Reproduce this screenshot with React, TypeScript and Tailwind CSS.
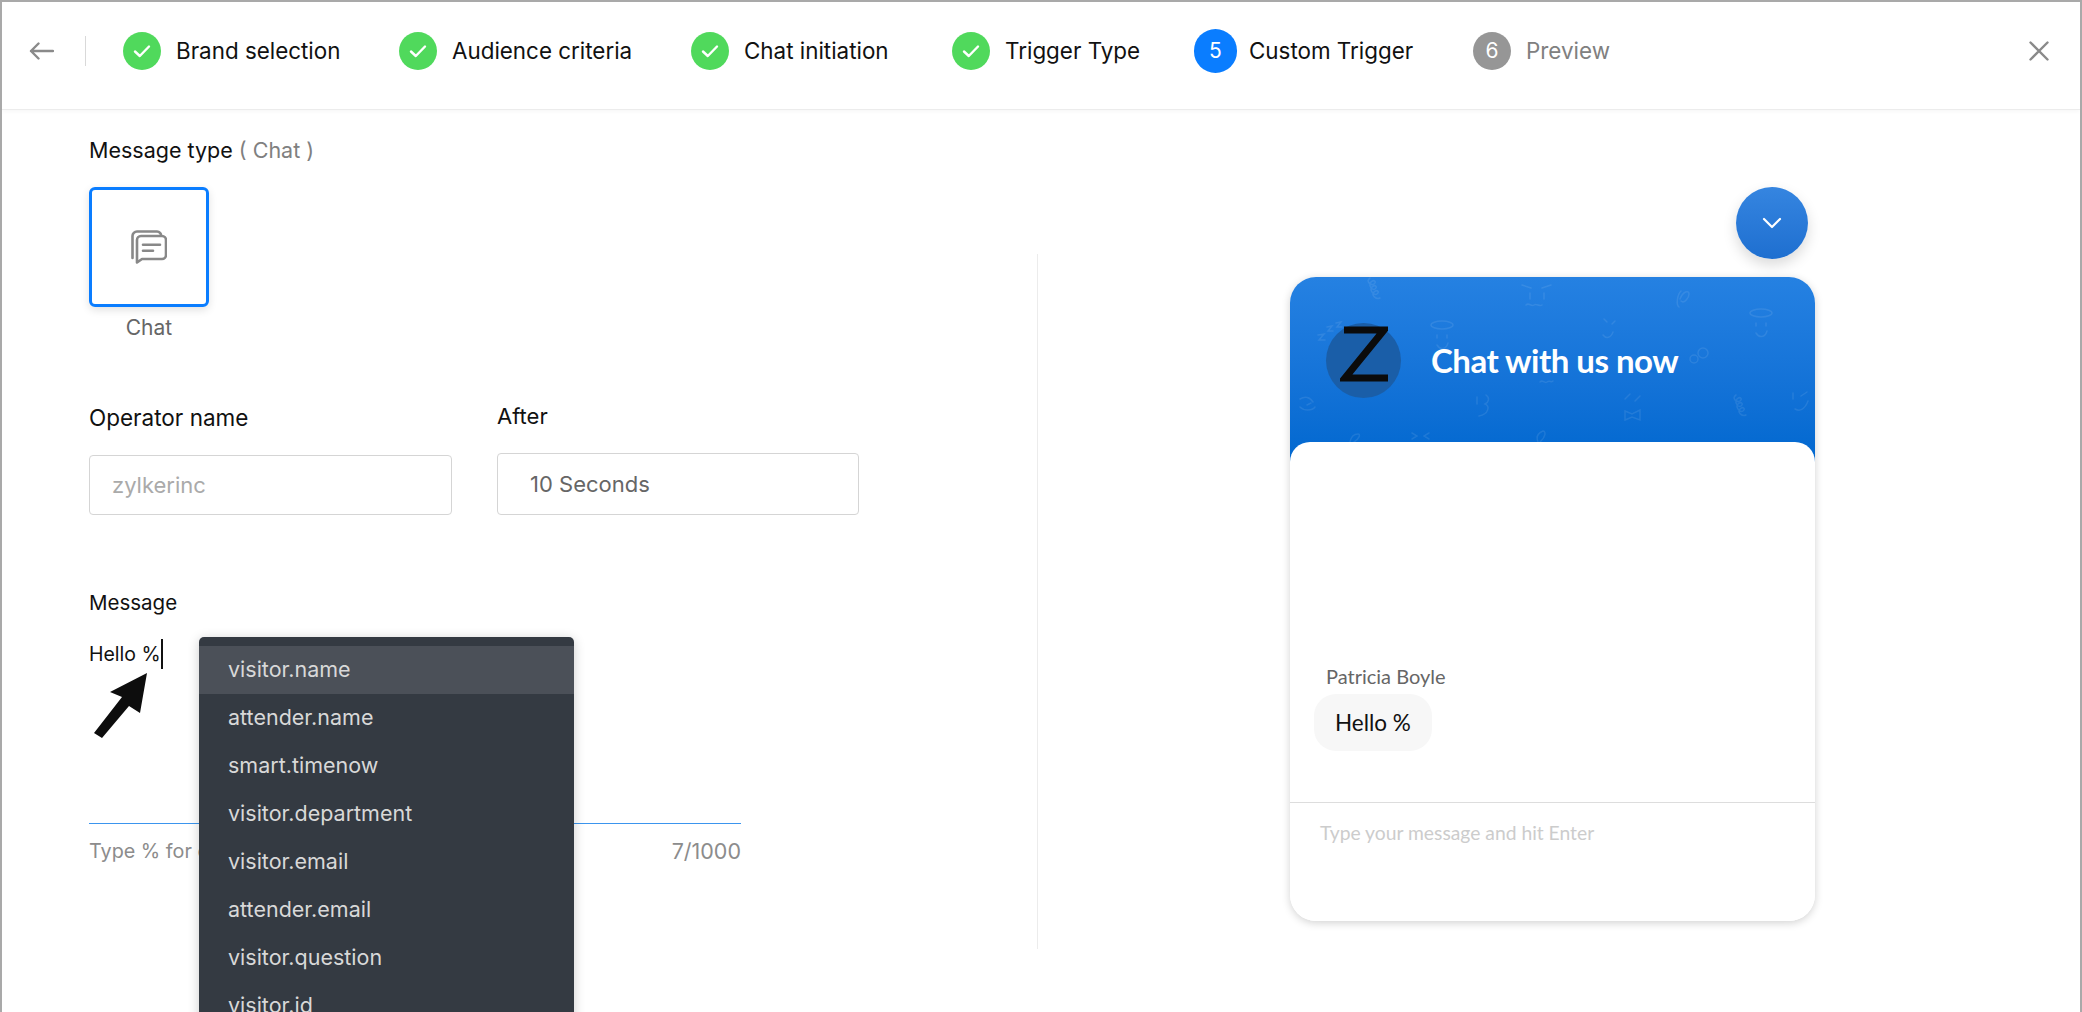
import React from "react";

const doneSteps = [
  { label: "Brand selection", width: "w-[276px]" },
  { label: "Audience criteria", width: "w-[292px]" },
  { label: "Chat initiation", width: "w-[261px]" },
  { label: "Trigger Type", width: "w-[242px]" },
];

const variables = [
  "visitor.name",
  "attender.name",
  "smart.timenow",
  "visitor.department",
  "visitor.email",
  "attender.email",
  "visitor.question",
  "visitor.id",
];

const Check = () => (
  <svg width="18" height="14" viewBox="0 0 18 14" fill="none">
    <path d="M2 7.5 6.8 12 16 2.5" stroke="white" strokeWidth="2.4" strokeLinecap="round" strokeLinejoin="round" />
  </svg>
);

const ChatIcon = () => (
  <svg width="36" height="34" viewBox="0 0 36 34" fill="none" stroke="#888888" strokeWidth="2.6" strokeLinecap="round" strokeLinejoin="round">
    <path d="M1.5 28V6A4.5 4.5 0 0 1 6 1.500h20a4 4 0 0 1 4 4.500" />
    <path d="M6 32.500V10a4 4 0 0 1 4-4h21a4 4 0 0 1 4 4v15a4 4 0 0 1-4 4H11z" fill="white" />
    <path d="M12 14.700h17M12 20.700h10" />
  </svg>
);

// faint doodles on the chat header
const Doodles = () => (
  <svg className="absolute inset-0" width="525" height="165" viewBox="0 0 525 165" fill="none" stroke="white" strokeOpacity="0.09" strokeWidth="1.5" strokeLinecap="round">
    <path d="M80 1c-5 3 1 8 4 6s0-5-3-2 1 9 4 7 0-5-3-2 2 9 5 7 0-5-3-2 2 8 6 6" />
    <path d="M232 8l9 3M252 11l9-3M240 16v6M254 16v6M236 28c3-3 5 2 8 0s5 2 8 0" />
    <path d="M391 14c-4 4-5 14-2 16M390 22c3-8 9-9 9-5s-5 10-8 7" />
    <path d="M28 58l6-1-5 6h6M37 50l5-1-4 5h5M46 46l5-1-4 5h5" />
    <ellipse cx="152" cy="48" rx="11" ry="4" />
    <path d="M147 58v3M157 58v3M147 68c3 5 9 5 11-2" />
    <path d="M314 42l3 3M325 44l-3 3M313 58c3 4 8 3 10-3" />
    <ellipse cx="471" cy="36" rx="11" ry="4" />
    <path d="M466 46v3M476 46v3M466 56c3 5 9 5 11-2" />
    <circle cx="404" cy="82" r="4" />
    <circle cx="413" cy="76" r="5" />
    <path d="M250 105c3-3 4 2 7 0s4 1 6-1" />
    <path d="M10 130c4 4 12 4 15 0M10 122c5-3 10-2 13 3M17 128l4-2" />
    <path d="M187 120v7M196 118c4 3 3 7-1 9 5 2 4 10-6 12" />
    <path d="M335 122l5-5M345 124l5-5M335 134l7 3 8-4v10l-8-3-7 3z" />
    <path d="M446 118c-5 3 1 8 4 6s0-5-3-2 1 9 4 7 0-5-3-2 2 9 5 7 0-5-3-2 2 8 6 6" />
    <path d="M503 116v6M517 115l-6 4M505 132c5 3 10 0 13-8" />
    <path d="M60 165c1-5 4-8 8-8 3 0 1 5-4 8" />
    <path d="M122 156l5 3-5 3M139 156l-5 3 5 3" />
    <path d="M248 165c-2-5 0-9 5-11 3 0 3 6-3 11" />
  </svg>
);

const App = () => {
  return (
    <div
      className="relative w-[2082px] h-[1012px] overflow-hidden bg-white border-t-2 border-l-2 border-r-2 border-[#a9a9a9] text-[22px] text-[#111111]"
      style={{ fontFamily: "Inter, 'Liberation Sans', sans-serif" }}
    >
      <header className="flex items-center h-[108px] border-b border-[#ececec] shadow-[0_2px_4px_rgba(0,0,0,0.03)] pb-[10px] text-[22.400px]">
        <button className="ml-[27px] w-[25px] text-[#8a8a8a]">
          <svg width="25" height="18" viewBox="0 0 25 18" fill="none" stroke="currentColor" strokeWidth="2.4" strokeLinecap="round" strokeLinejoin="round">
            <path d="M24 9H2M9.500 1.500 2 9l7.500 7.500" />
          </svg>
        </button>
        <div className="ml-[31px] mr-[37px] h-[30px] w-px bg-[#d9d9d9]" />
        {doneSteps.map((step) => (
          <div key={step.label} className={`flex items-center shrink-0 ${step.width}`}>
            <span className="flex items-center justify-center w-[38px] h-[38px] rounded-full bg-[#50d95c]">
              <Check />
            </span>
            <span className="ml-[15px] whitespace-nowrap">{step.label}</span>
          </div>
        ))}
        <div className="flex items-center shrink-0 w-[279px]">
          <span className="flex items-center justify-center w-[43px] h-[44px] rounded-full bg-[#0a7dff] text-white text-[21px]">5</span>
          <span className="ml-[12px] whitespace-nowrap">Custom Trigger</span>
        </div>
        <div className="flex items-center">
          <span className="flex items-center justify-center w-[38px] h-[38px] rounded-full bg-[#969696] text-white text-[21px]">6</span>
          <span className="ml-[15px] whitespace-nowrap text-[#808080]">Preview</span>
        </div>
        <button className="ml-auto mr-[31px] text-[#8a8a8a]">
          <svg width="20" height="20" viewBox="0 0 20 20" fill="none" stroke="currentColor" strokeWidth="2.4" strokeLinecap="round">
            <path d="M1.500 1.500l17 17M18.500 1.500l-17 17" />
          </svg>
        </button>
      </header>

      <main className="flex">
        <section className="relative w-[1035px] shrink-0 pl-[87px] pt-[25px]">
          <p className="leading-[30px] text-[21.500px]">
            Message type <span className="text-[#808080]">( Chat )</span>
          </p>
          <div className="mt-[22px] w-[120px] h-[120px] flex items-center justify-center rounded-[6px] border-[3px] border-[#0a7dff] shadow-[0_3px_8px_rgba(0,0,0,0.12)]">
            <ChatIcon />
          </div>
          <p className="mt-[6px] w-[120px] text-center text-[21px] leading-[30px] text-[#666666]">Chat</p>

          <div className="flex mt-[60px]">
            <div className="w-[363px] mr-[45px]">
              <p className="leading-[30px] mb-[22px] text-[22.500px]">Operator name</p>
              <div className="flex items-center h-[60px] px-[22px] rounded-[4px] border border-[#d5d5d5] text-[#aaaaaa]">zylkerinc</div>
            </div>
            <div className="w-[362px] -mt-[2px]">
              <p className="leading-[30px] mb-[22px]">After</p>
              <div className="flex items-center h-[62px] px-[32px] rounded-[4px] border border-[#d5d5d5] text-[#666666]">10 Seconds</div>
            </div>
          </div>

          <p className="mt-[73px] text-[20.500px] leading-[30px]">Message</p>
          <div className="mt-[19px] h-[187px] w-[652px] border-b border-[#3b95ee]">
            <span className="inline-block text-[19.500px] leading-[30px] border-r-2 border-[#111111]">Hello %</span>
          </div>
          <div className="flex justify-between items-center w-[652px] mt-[12px] leading-[30px] text-[#8c8c8c]">
            <span className="text-[19.800px]">Type % for custom variables</span>
            <span className="text-[21.500px]">7/1000</span>
          </div>

          {/* annotation arrow */}
          <svg className="absolute left-[92px] top-[563px]" width="53" height="65" viewBox="0 0 53 65" fill="#0d0d0d">
            <path d="M53 0 46 40 35 33 8 65 0 60 28 24 16 19z" />
          </svg>

          {/* variable menu */}
          <div className="absolute left-[197px] top-[527px] w-[375px] h-[400px] pt-[9px] bg-[#343a42] rounded-t-[5px] shadow-[0_2px_12px_rgba(0,0,0,0.2)] text-[21.500px] text-[#d8d8d8]">
            {variables.map((name, i) => (
              <div key={name} className={`h-[48px] flex items-center px-[29px] pb-[2px] ${i === 0 ? "bg-[#4b5058]" : ""}`}>
                {name}
              </div>
            ))}
          </div>
        </section>

        <section className="flex-1 flex">
          <div className="w-px h-[695px] mt-[144px] bg-[#ececec] shrink-0" />
          <div className="relative ml-[252px] mt-[77px] w-[525px]">
            <button className="absolute right-[7px] top-0 w-[72px] h-[72px] flex items-center justify-center rounded-full bg-gradient-to-b from-[#3585e0] to-[#1e6fd0] shadow-[0_6px_14px_rgba(0,0,0,0.15)]">
              <svg width="20" height="12" viewBox="0 0 20 12" fill="none" stroke="white" strokeWidth="2.2" strokeLinecap="round" strokeLinejoin="round">
                <path d="M2 2l8 8 8-8" />
              </svg>
            </button>
            <div
              className="mt-[90px] h-[644px] rounded-[26px] bg-white shadow-[0_2px_8px_rgba(0,0,0,0.18)] flex flex-col overflow-hidden"
              style={{ fontFamily: "Lato, 'Liberation Sans', sans-serif" }}
            >
              <div className="relative h-[190px] shrink-0 bg-gradient-to-b from-[#2581e2] to-[#0067cf]">
                <Doodles />
                <div className="relative flex items-center pl-[36px] pt-[46px]">
                  <div className="w-[75px] h-[75px] rounded-full bg-[#1a5ea8] flex items-start justify-center pt-[3px]">
                    <svg width="48" height="56" viewBox="0 0 48 56" fill="none" stroke="#0b0b0b" strokeWidth="7" strokeLinejoin="miter">
                      <path d="M4 4h40L5 52h43" />
                    </svg>
                  </div>
                  <span className="ml-[30px] text-[33px] font-bold text-white tracking-[-0.5px]">Chat with us now</span>
                </div>
              </div>
              <div className="flex-1 -mt-[25px] relative bg-white rounded-t-[20px] flex flex-col">
                <div className="h-[361px] shrink-0 border-b border-[#dddddd] pt-[222px]">
                  <p className="pl-[36px] text-[20px] leading-[24px] text-[#666666]">Patricia Boyle</p>
                  <div className="inline-flex items-center ml-[24px] mt-[6px] h-[57px] px-[21px] rounded-[22px] bg-[#f7f7f7] text-[22.500px] text-[#111111]">Hello %</div>
                </div>
                <p className="pl-[30px] pt-[18px] text-[19.300px] leading-[24px] text-[#cccccc]">Type your message and hit Enter</p>
              </div>
            </div>
          </div>
        </section>
      </main>
    </div>
  );
};

export default App;
